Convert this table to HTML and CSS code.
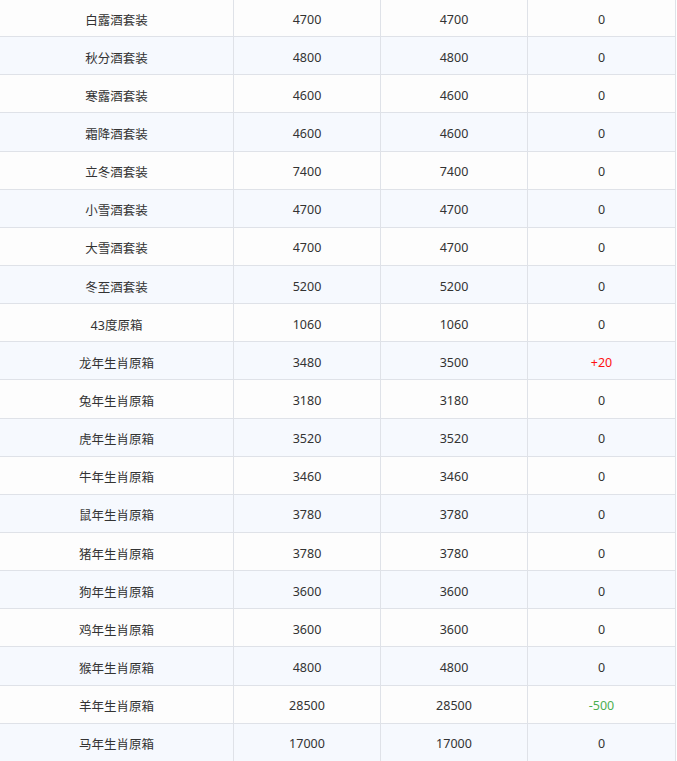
FILE: index.html
```html
<!DOCTYPE html>
<html lang="zh-CN">
<head>
<meta charset="utf-8">
<title>价格表</title>
<link rel="stylesheet" href="styles.css">
</head>
<body>
<div class="table">
  <div class="row"><div class="cell">白露酒套装</div><div class="cell">4700</div><div class="cell">4700</div><div class="cell">0</div></div>
  <div class="row"><div class="cell">秋分酒套装</div><div class="cell">4800</div><div class="cell">4800</div><div class="cell">0</div></div>
  <div class="row"><div class="cell">寒露酒套装</div><div class="cell">4600</div><div class="cell">4600</div><div class="cell">0</div></div>
  <div class="row"><div class="cell">霜降酒套装</div><div class="cell">4600</div><div class="cell">4600</div><div class="cell">0</div></div>
  <div class="row"><div class="cell">立冬酒套装</div><div class="cell">7400</div><div class="cell">7400</div><div class="cell">0</div></div>
  <div class="row"><div class="cell">小雪酒套装</div><div class="cell">4700</div><div class="cell">4700</div><div class="cell">0</div></div>
  <div class="row"><div class="cell">大雪酒套装</div><div class="cell">4700</div><div class="cell">4700</div><div class="cell">0</div></div>
  <div class="row"><div class="cell">冬至酒套装</div><div class="cell">5200</div><div class="cell">5200</div><div class="cell">0</div></div>
  <div class="row"><div class="cell">43度原箱</div><div class="cell">1060</div><div class="cell">1060</div><div class="cell">0</div></div>
  <div class="row"><div class="cell">龙年生肖原箱</div><div class="cell">3480</div><div class="cell">3500</div><div class="cell up">+20</div></div>
  <div class="row"><div class="cell">兔年生肖原箱</div><div class="cell">3180</div><div class="cell">3180</div><div class="cell">0</div></div>
  <div class="row"><div class="cell">虎年生肖原箱</div><div class="cell">3520</div><div class="cell">3520</div><div class="cell">0</div></div>
  <div class="row"><div class="cell">牛年生肖原箱</div><div class="cell">3460</div><div class="cell">3460</div><div class="cell">0</div></div>
  <div class="row"><div class="cell">鼠年生肖原箱</div><div class="cell">3780</div><div class="cell">3780</div><div class="cell">0</div></div>
  <div class="row"><div class="cell">猪年生肖原箱</div><div class="cell">3780</div><div class="cell">3780</div><div class="cell">0</div></div>
  <div class="row"><div class="cell">狗年生肖原箱</div><div class="cell">3600</div><div class="cell">3600</div><div class="cell">0</div></div>
  <div class="row"><div class="cell">鸡年生肖原箱</div><div class="cell">3600</div><div class="cell">3600</div><div class="cell">0</div></div>
  <div class="row"><div class="cell">猴年生肖原箱</div><div class="cell">4800</div><div class="cell">4800</div><div class="cell">0</div></div>
  <div class="row"><div class="cell">羊年生肖原箱</div><div class="cell">28500</div><div class="cell">28500</div><div class="cell down">-500</div></div>
  <div class="row"><div class="cell">马年生肖原箱</div><div class="cell">17000</div><div class="cell">17000</div><div class="cell">0</div></div>
</div>
</body>
</html>
```
FILE: styles.css
```css
html, body {
  margin: 0;
  padding: 0;
  background: #ffffff;
  overflow: hidden;
}
body {
  font-family: "Noto Sans", "Noto Sans CJK SC", sans-serif;
  font-size: 12.5px;
  color: #333333;
}
.table {
  width: 676px;
  margin-top: -1px;
}
.row {
  display: grid;
  grid-template-columns: 234px 147px 147px 148px;
  height: 38.15px;
  box-sizing: border-box;
  border-bottom: 1px solid #dfe2e8;
  background: #fdfdfd;
}
.row:nth-child(even) {
  background: #f6f9fe;
}
.cell {
  display: flex;
  align-items: center;
  justify-content: center;
  border-right: 1px solid #dfe2e8;
  padding-top: 3px;
  box-sizing: border-box;
}
.up {
  color: #ff1111;
}
.down {
  color: #4caf50;
}
```
